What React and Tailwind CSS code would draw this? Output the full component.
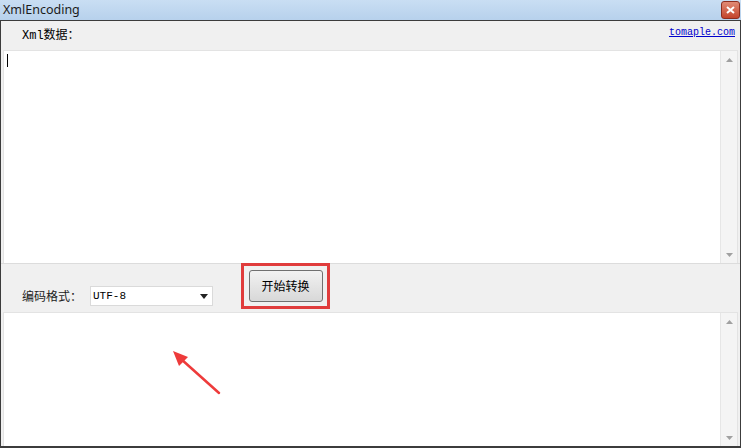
import React from 'react';

const mono = { fontFamily: '"Liberation Mono", "Noto Sans CJK SC", monospace' };

const ScrollBar = () => (
  <div className="w-[17px] h-full flex flex-col justify-between bg-[#f4f4f4] border-l border-[#e6e6e6]">
    <div className="h-[17px] flex items-center justify-center">
      <svg width="7" height="4" viewBox="0 0 7 4"><path d="M0 4 L3.5 0 L7 4 Z" fill="#a0a0a0" /></svg>
    </div>
    <div className="h-[17px] flex items-center justify-center">
      <svg width="7" height="4" viewBox="0 0 7 4"><path d="M0 0 L3.5 4 L7 0 Z" fill="#a0a0a0" /></svg>
    </div>
  </div>
);

export default function App() {
  return (
    <div className="w-[741px] h-[448px] flex flex-col bg-[#f0f0f0] overflow-hidden" style={{ fontFamily: '"Noto Sans CJK SC", "Noto Sans", sans-serif' }}>
      {/* Title bar */}
      <div className="h-[20px] flex items-center justify-between bg-gradient-to-b from-[#c9def3] to-[#b7d1ec] pl-[3px] pr-[1px]">
        <span className="text-[12.5px] text-[#1b1b1b] leading-none" style={{ fontFamily: '"Noto Sans", "Open Sans", sans-serif' }}>XmlEncoding</span>
        <div className="w-[19px] h-[18px] rounded-[3px] bg-gradient-to-b from-[#e08a75] to-[#c3432b] border border-[#8d2e20] flex items-center justify-center">
          <svg width="9" height="8" viewBox="0 0 9 8"><path d="M1 1 L8 7 M8 1 L1 7" stroke="#fff" strokeWidth="2" /></svg>
        </div>
      </div>

      {/* Window body */}
      <div className="flex-1 flex flex-col border border-[#3c3c3c] border-b-2">
        {/* Header row */}
        <div className="h-[29px] flex items-center justify-between pl-[21px] pr-[5px] pt-[1px]">
          <span className="text-[12px] text-black" style={mono}>Xml数据：</span>
          <span className="text-[10px] text-[#0000cc] underline -mt-[8px]" style={mono}>tomaple.com</span>
        </div>

        {/* Top textarea */}
        <div className="mx-[2px] h-[213px] flex bg-white border-t border-[#8fa5bc] border-l border-[#c6c6c6] border-r border-[#e3e3e3]">
          <div className="flex-1 relative">
            <div className="absolute left-[3px] top-[3px] w-[1px] h-[13px] bg-black" />
          </div>
          <ScrollBar />
        </div>

        {/* Middle controls */}
        <div className="h-[49px] flex items-start border-t border-[#dcdcdc]">
          <div className="flex items-center mt-[22px] ml-[21px]">
            <span className="text-[12px] text-[#222]">编码格式：</span>
            <div className="ml-[8px] w-[123px] h-[20px] bg-white border border-[#dadada] flex items-center justify-between pl-[2px] pr-[4px]">
              <span className="text-[11px] text-black" style={mono}>UTF-8</span>
              <svg width="8" height="5" viewBox="0 0 8 5"><path d="M0 0 L4 5 L8 0 Z" fill="#222" /></svg>
            </div>
          </div>
          <div className="ml-[28px] -mt-[1px] w-[89px] h-[46px] border-[3px] border-[#e03c3c] flex items-center justify-center">
            <div className="w-[74px] h-[32px] rounded-[3px] border border-[#707070] bg-gradient-to-b from-[#f2f2f2] to-[#d8d8d8] flex items-center justify-center">
              <span className="text-[12px] text-black">开始转换</span>
            </div>
          </div>
        </div>

        {/* Bottom textarea */}
        <div className="mx-[2px] flex-1 flex bg-white border-t border-[#8fa5bc] border-l border-[#c6c6c6] border-r border-[#e3e3e3] relative">
          <div className="flex-1" />
          <ScrollBar />
          <svg className="absolute left-[165px] top-[35px]" width="56" height="50" viewBox="0 0 56 50">
            <path d="M50 45 L12 11" stroke="#ee3b3b" strokeWidth="2.5" strokeLinecap="round" />
            <path d="M4 3 L19 9 L10 18 Z" fill="#ee3b3b" />
          </svg>
        </div>
      </div>
    </div>
  );
}
